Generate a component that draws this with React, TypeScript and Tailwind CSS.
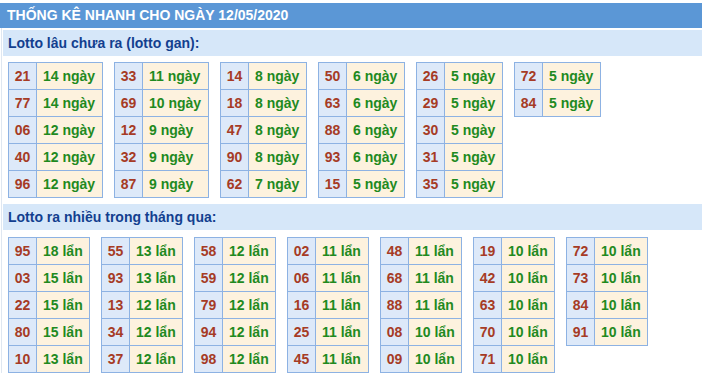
import React from 'react';

type Row = [string, string];

const gan: Row[][] = [
  [['21','14 ngày'],['77','14 ngày'],['06','12 ngày'],['40','12 ngày'],['96','12 ngày']],
  [['33','11 ngày'],['69','10 ngày'],['12','9 ngày'],['32','9 ngày'],['87','9 ngày']],
  [['14','8 ngày'],['18','8 ngày'],['47','8 ngày'],['90','8 ngày'],['62','7 ngày']],
  [['50','6 ngày'],['63','6 ngày'],['88','6 ngày'],['93','6 ngày'],['15','5 ngày']],
  [['26','5 ngày'],['29','5 ngày'],['30','5 ngày'],['31','5 ngày'],['35','5 ngày']],
  [['72','5 ngày'],['84','5 ngày']],
];

const nhieu: Row[][] = [
  [['95','18 lẩn'],['03','15 lẩn'],['22','15 lẩn'],['80','15 lẩn'],['10','13 lẩn']],
  [['55','13 lẩn'],['93','13 lẩn'],['13','12 lẩn'],['34','12 lẩn'],['37','12 lẩn']],
  [['58','12 lẩn'],['59','12 lẩn'],['79','12 lẩn'],['94','12 lẩn'],['98','12 lẩn']],
  [['02','11 lẩn'],['06','11 lẩn'],['16','11 lẩn'],['25','11 lẩn'],['45','11 lẩn']],
  [['48','11 lẩn'],['68','11 lẩn'],['88','11 lẩn'],['08','10 lẩn'],['09','10 lẩn']],
  [['19','10 lẩn'],['42','10 lẩn'],['63','10 lẩn'],['70','10 lẩn'],['71','10 lẩn']],
  [['72','10 lẩn'],['73','10 lẩn'],['84','10 lẩn'],['91','10 lẩn']],
];

function Box({ rows, valueCls }: { rows: Row[]; valueCls: string }) {
  return (
    <div className="border-l border-t border-[#8db2e3] shrink-0">
      {rows.map(([n, v], i) => (
        <div key={i} className="flex h-[27px]">
          <div className="w-[28px] border-r border-b border-[#8db2e3] bg-[#dde9f9] text-[#a63b25] flex items-center justify-center">
            {n}
          </div>
          <div className={`${valueCls} border-r border-b border-[#8db2e3] bg-[#fdf2de] text-[#1f8a1f] flex items-center pl-[6px]`}>
            {v}
          </div>
        </div>
      ))}
    </div>
  );
}

export default function App() {
  return (
    <div className="w-[702px] h-[374px] overflow-hidden bg-white text-[14px] font-bold" style={{ fontFamily: '"Liberation Sans", Arial, sans-serif' }}>
      <div className="mt-[3px] h-[25px] bg-[#5b97d6] text-white flex items-center pl-[7px]">
        THỐNG KÊ NHANH CHO NGÀY 12/05/2020
      </div>
      <div className="ml-[1px] border-l border-[#dfe7f1] pt-[2px] pl-[1px]">
        <div className="h-[26px] bg-[#d6e7f9] text-[#133f8f] flex items-center pl-[5px]">
          Lotto lâu chưa ra (lotto gan):
        </div>
        <div className="flex items-start gap-[11px] pl-[5px] mt-[6px]">
          {gan.map((rows, i) => (
            <Box key={i} rows={rows} valueCls={i < 2 ? 'w-[66px]' : 'w-[58px]'} />
          ))}
        </div>
        <div className="h-[26px] bg-[#d6e7f9] text-[#133f8f] flex items-center pl-[5px] mt-[6px]">
          Lotto ra nhiều trong tháng qua:
        </div>
        <div className="flex items-start gap-[11px] pl-[5px] mt-[7px]">
          {nhieu.map((rows, i) => (
            <Box key={i} rows={rows} valueCls="w-[53px]" />
          ))}
        </div>
      </div>
    </div>
  );
}
